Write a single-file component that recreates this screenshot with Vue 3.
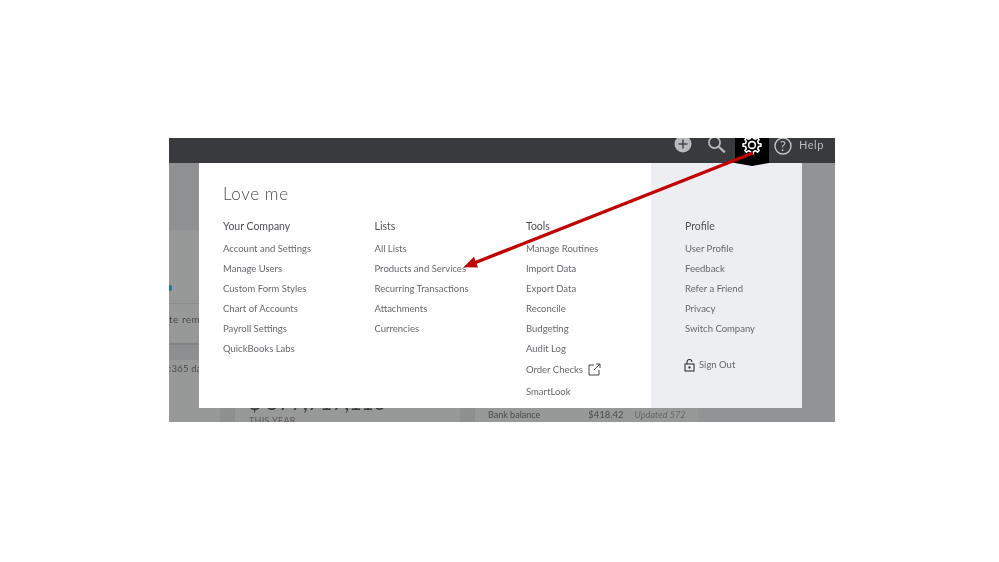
<script setup>
const columns = [
  {
    title: 'Your Company',
    links: ['Account and Settings', 'Manage Users', 'Custom Form Styles', 'Chart of Accounts', 'Payroll Settings', 'QuickBooks Labs'],
  },
  {
    title: 'Lists',
    links: ['All Lists', 'Products and Services', 'Recurring Transactions', 'Attachments', 'Currencies'],
  },
  {
    title: 'Tools',
    links: ['Manage Routines', 'Import Data', 'Export Data', 'Reconcile', 'Budgeting', 'Audit Log'],
  },
];
const profile = ['User Profile', 'Feedback', 'Refer a Friend', 'Privacy', 'Switch Company'];

// eight toothed gear outline, centred on 11,11
function gearPath(teeth, outer, root) {
  const pts = [];
  const step = (Math.PI * 2) / teeth;
  for (let i = 0; i < teeth; i++) {
    const a = i * step - Math.PI / 2;
    const corners = [
      [root, a - step * 0.3],
      [outer, a - step * 0.16],
      [outer, a + step * 0.16],
      [root, a + step * 0.3],
    ];
    for (const [r, t] of corners) {
      pts.push((11 + r * Math.cos(t)).toFixed(2) + ' ' + (11 + r * Math.sin(t)).toFixed(2));
    }
  }
  return 'M' + pts.join('L') + 'Z';
}
const gear = gearPath(8, 9, 6.7);
</script>

<template>
  <div class="page">
    <div class="shot">
      <header class="topbar">
        <svg class="plus" width="18" height="18" viewBox="0 0 18 18">
          <circle cx="9" cy="9" r="8.5" fill="#b9babd" />
          <path d="M9 4.5v9M4.5 9h9" stroke="#4a4b4e" stroke-width="1.6" />
        </svg>
        <svg class="search" width="20" height="20" viewBox="0 0 20 20" fill="none" stroke="#b9babd">
          <circle cx="7.5" cy="7.5" r="5.6" stroke-width="1.7" />
          <path d="M11.8 11.8l6 5.6" stroke-width="2.2" />
        </svg>
        <div class="gear-tab">
          <svg width="22" height="22" viewBox="0 0 22 22" fill="none" stroke="#fff" stroke-width="1.6">
            <path :d="gear" stroke-linejoin="round" />
            <circle cx="11" cy="11" r="3.4" />
          </svg>
        </div>
        <svg class="question" width="18" height="18" viewBox="0 0 18 18" fill="none">
          <circle cx="9" cy="9" r="8" stroke="#c4c5c8" stroke-width="1.4" />
          <text x="9" y="13.6" text-anchor="middle" class="q-mark">?</text>
        </svg>
        <span class="help">Help</span>
      </header>

      <div class="dim">
        <div class="dim-left">
          <span class="dim-dot"></span>
          <span class="dim-rem">te rem</span>
          <span class="dim-days">:365 da</span>
        </div>
        <div class="dim-band"></div>
        <div class="dim-strip-a"></div>
        <div class="dim-strip-b"></div>
        <div class="dim-amount">$ 577,717,110</div>
        <div class="dim-year">THIS YEAR</div>
        <div class="dim-bank">
          <span>Bank balance</span>
          <span class="dim-sum">$418.42</span>
          <em>Updated 572</em>
        </div>
      </div>

      <section class="menu">
        <div class="menu-main">
          <h1>Love me</h1>
          <div class="cols">
            <div v-for="col in columns" :key="col.title" class="col">
              <h2>{{ col.title }}</h2>
              <a v-for="link in col.links" :key="link">{{ link }}</a>
              <template v-if="col.title === 'Tools'">
                <a class="extra">
                  Order Checks
                  <svg width="13" height="13" viewBox="0 0 13 13" fill="none" stroke="#444" stroke-width="1">
                    <path d="M6 2H1v10h10V7M6 7 12 1M8 1h4v4" />
                  </svg>
                </a>
                <a class="extra">SmartLook</a>
              </template>
            </div>
          </div>
        </div>
        <aside class="menu-side">
          <h2>Profile</h2>
          <a v-for="link in profile" :key="link">{{ link }}</a>
          <a class="signout">
            <svg width="11" height="13" viewBox="0 0 11 13" fill="none" stroke="#333" stroke-width="1.1">
              <rect x="1" y="5" width="9" height="7" />
              <path d="M3 5V3a2.5 2.5 0 0 1 5 0" />
              <circle cx="5.5" cy="8.5" r=".6" fill="#333" />
            </svg>
            Sign Out
          </a>
        </aside>
      </section>

      <svg class="arrow" width="666" height="284" viewBox="0 0 666 284">
        <path d="M584 15 304 125.500" stroke="#c00000" stroke-width="3.4" />
        <path d="M294.500 129.300 305 118.800 309 129.500z" fill="#c00000" />
      </svg>
    </div>
  </div>
</template>

<style>
html, body { background: #fff; }
</style>

<style scoped>
.page {
  width: 999px;
  height: 562px;
  padding: 138px 0 0 169px;
  box-sizing: border-box;
  overflow: hidden;
  font-family: Lato, "Open Sans", sans-serif;
  filter: blur(0.5px);
}
.shot {
  position: relative;
  width: 666px;
  height: 284px;
  overflow: hidden;
  background: #929394;
}
.topbar {
  display: flex;
  align-items: flex-start;
  height: 25px;
  background: #393a3d;
  padding-right: 11px;
  box-sizing: border-box;
  justify-content: flex-end;
  position: relative;
  z-index: 3;
}
.plus { margin-top: -3px; margin-right: 15px; }
.search { margin-top: -3px; margin-right: 8px; }
.gear-tab {
  width: 34px;
  height: 28px;
  background: #000;
  clip-path: polygon(0 0, 100% 0, 100% 25px, 50% 28px, 0 25px);
  display: flex;
  justify-content: center;
  margin-bottom: -3px;
  margin-right: 5px;
}
.gear-tab svg { margin-top: -4px; }
.question { margin-top: -1px; margin-right: 7px; }
.q-mark {
  font: 400 13px Lato, sans-serif;
  fill: #c4c5c8;
}
.help {
  font-size: 11px;
  line-height: 14px;
  color: #b9bcc2;
  letter-spacing: 0.5px;
  width: 25px;
}
.dim {
  position: absolute;
  inset: 25px 0 0;
  color: #4c4c4c;
  font-size: 9.5px;
}
.dim-left {
  position: absolute;
  left: 0;
  top: 0;
  width: 30px;
  height: 259px;
  overflow: hidden;
  background: linear-gradient(#8f9092 67px, #979898 67px);
}
.dim-dot {
  position: absolute;
  left: -1px;
  top: 122px;
  width: 4px;
  height: 6px;
  border-radius: 50%;
  background: #1d6fae;
}
.dim-rem {
  position: absolute;
  left: 0;
  top: 140px;
  height: 40px;
  width: 30px;
  border-top: 1px solid #8a8b8b;
  box-sizing: border-box;
  line-height: 30px;
  white-space: nowrap;
  font-size: 10px;
  letter-spacing: 0.5px;
}
.dim-days {
  position: absolute;
  left: 0;
  top: 180px;
  width: 30px;
  height: 34px;
  border-top: 2px solid #818282;
  background: linear-gradient(#8e8f90 15px, transparent 15px);
  box-sizing: border-box;
  padding-top: 17px;
  line-height: 14px;
  white-space: nowrap;
  letter-spacing: 0.2px;
}
.dim-band {
  position: absolute;
  left: 0;
  bottom: 0;
  width: 529px;
  height: 14px;
  background: #979898;
}
.dim-strip-a,
.dim-strip-b {
  position: absolute;
  bottom: 0;
  height: 14px;
  background: #8e8f8f;
}
.dim-strip-a { left: 51px; width: 15px; }
.dim-strip-b { left: 291px; width: 15px; }
.dim-amount {
  position: absolute;
  left: 80px;
  top: 224px;
  font-size: 21px;
  line-height: 30px;
  white-space: nowrap;
  color: #3b3b3b;
}
.dim-year {
  position: absolute;
  left: 80px;
  top: 252px;
  font-size: 9px;
  letter-spacing: 0.3px;
  color: #5a5a5a;
}
.dim-bank {
  position: absolute;
  left: 319px;
  top: 245px;
  display: flex;
  font-size: 9px;
  line-height: 14px;
}
.dim-sum { margin-left: 48px; margin-right: 11px; font-size: 9.5px; }
.dim-bank em { color: #666; font-size: 9.2px; }
.menu {
  position: absolute;
  left: 30px;
  top: 25px;
  width: 603px;
  height: 245px;
  display: flex;
  background: #fff;
  color: #66686c;
  z-index: 1;
}
.menu-main {
  flex: 1;
  padding: 21px 0 0 24px;
}
h1 {
  margin: 0 0 12px;
  font-size: 17px;
  line-height: 20px;
  font-weight: 300;
  letter-spacing: 0.6px;
  color: #4a4c50;
}
.cols {
  display: grid;
  grid-template-columns: 151.5px 151.5px 1fr;
}
.col, .menu-side {
  display: flex;
  flex-direction: column;
  align-items: flex-start;
}
h2 {
  margin: 0 0 3px;
  font-size: 10.5px;
  line-height: 20px;
  font-weight: 400;
  color: #4f5155;
}
a {
  font-size: 9.5px;
  line-height: 20px;
  white-space: nowrap;
}
.extra {
  display: flex;
  align-items: center;
  gap: 5px;
  line-height: 21px;
}
.extra + .extra { margin-top: 1px; }
.menu-side {
  width: 151px;
  box-sizing: border-box;
  padding: 53px 0 0 34px;
  background: #eceef1;
}
.signout {
  display: flex;
  align-items: center;
  gap: 4px;
  margin-top: 16px;
  margin-left: -1px;
}
.arrow {
  position: absolute;
  left: 0;
  top: 0;
  z-index: 4;
}
</style>
